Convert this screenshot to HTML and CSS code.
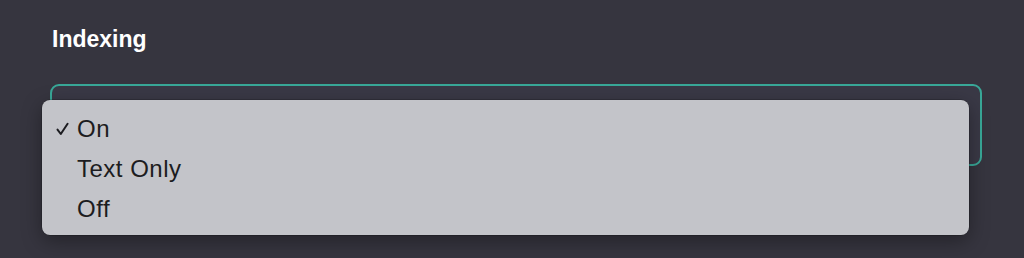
FILE: index.html
```html
<!DOCTYPE html>
<html lang="en">
<head>
<meta charset="utf-8">
<title>Indexing</title>
<link rel="stylesheet" href="styles.css">
</head>
<body>
<div class="panel">
  <h2 class="label">Indexing</h2>
  <div class="field">
    <div class="select"></div>
    <ul class="menu">
      <li class="item selected"><svg class="check" viewBox="0 0 13 14" width="13" height="14"><path d="M1.5 7.6 L4.8 12 L11.6 1.8" fill="none" stroke="#1c1c20" stroke-width="2" stroke-linecap="round" stroke-linejoin="round"/></svg>On</li>
      <li class="item">Text Only</li>
      <li class="item">Off</li>
    </ul>
  </div>
</div>
</body>
</html>
```
FILE: styles.css
```css
html, body {
  margin: 0;
  padding: 0;
  background: #36353f;
  height: 100%;
  overflow: hidden;
}
.panel {
  padding: 25px 42px 0 50px;
  font-family: "Liberation Sans", Arial, sans-serif;
}
.label {
  margin: 0 0 0 2px;
  color: #ffffff;
  font-size: 23px;
  font-weight: 700;
  line-height: 28px;
}
.field {
  position: relative;
  margin-top: 31px;
}
.select {
  box-sizing: border-box;
  height: 82px;
  border: 2px solid #39a898;
  border-radius: 9px;
  background: #3a3946;
}
.menu {
  position: absolute;
  left: -8px;
  top: 16px;
  width: 927px;
  box-sizing: border-box;
  margin: 0;
  padding: 9px 0 6px 35px;
  list-style: none;
  background: #c3c4c9;
  border-radius: 8px;
  box-shadow: 0 6px 20px rgba(0, 0, 0, 0.35), 0 0 0 0.5px rgba(0, 0, 0, 0.3);
}
.item {
  position: relative;
  height: 40px;
  line-height: 40px;
  font-size: 24px;
  letter-spacing: 0.5px;
  color: #1c1c20;
}
.check {
  position: absolute;
  left: -21px;
  top: 13px;
}
```
